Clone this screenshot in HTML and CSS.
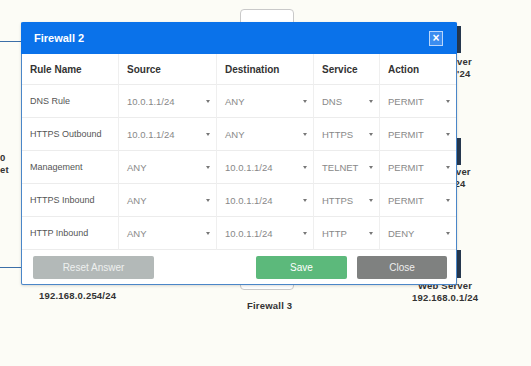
FILE: index.html
```html
<!DOCTYPE html>
<html lang="en">
<head>
    <meta charset="UTF-8">
    <title>Firewall 2</title>
    <link rel="stylesheet" href="styles.css">
</head>
<body>
    <div class="scene">
        <!-- diagram behind the dialog -->
        <div class="link link-top"></div>
        <div class="link link-bottom"></div>
        <div class="device fw3"></div>
        <div class="server server-1"></div>
        <div class="server server-2"></div>
        <div class="server server-3"></div>
        <div class="label host-left">0<br>et</div>
        <div class="label srv1">ver<br>'24</div>
        <div class="label srv2">rver<br>'24</div>
        <div class="label gw">192.168.0.254/24</div>
        <div class="label fw3-name">Firewall 3</div>
        <div class="label web">Web Server<br>192.168.0.1/24</div>

        <div class="modal">
            <div class="modal-header">
                <span class="modal-title">Firewall 2</span>
                <span class="modal-close">&times;</span>
            </div>
            <div class="rules">
                <div class="cell head">Rule Name</div>
                <div class="cell head">Source</div>
                <div class="cell head">Destination</div>
                <div class="cell head">Service</div>
                <div class="cell head">Action</div>

                <div class="cell name">DNS Rule</div>
                <div class="cell pick">10.0.1.1/24<i class="caret"></i></div>
                <div class="cell pick">ANY<i class="caret"></i></div>
                <div class="cell pick">DNS<i class="caret"></i></div>
                <div class="cell pick">PERMIT<i class="caret"></i></div>

                <div class="cell name">HTTPS Outbound</div>
                <div class="cell pick">10.0.1.1/24<i class="caret"></i></div>
                <div class="cell pick">ANY<i class="caret"></i></div>
                <div class="cell pick">HTTPS<i class="caret"></i></div>
                <div class="cell pick">PERMIT<i class="caret"></i></div>

                <div class="cell name">Management</div>
                <div class="cell pick">ANY<i class="caret"></i></div>
                <div class="cell pick">10.0.1.1/24<i class="caret"></i></div>
                <div class="cell pick">TELNET<i class="caret"></i></div>
                <div class="cell pick">PERMIT<i class="caret"></i></div>

                <div class="cell name">HTTPS Inbound</div>
                <div class="cell pick">ANY<i class="caret"></i></div>
                <div class="cell pick">10.0.1.1/24<i class="caret"></i></div>
                <div class="cell pick">HTTPS<i class="caret"></i></div>
                <div class="cell pick">PERMIT<i class="caret"></i></div>

                <div class="cell name">HTTP Inbound</div>
                <div class="cell pick">ANY<i class="caret"></i></div>
                <div class="cell pick">10.0.1.1/24<i class="caret"></i></div>
                <div class="cell pick">HTTP<i class="caret"></i></div>
                <div class="cell pick">DENY<i class="caret"></i></div>
            </div>
            <div class="modal-footer">
                <button class="btn btn-reset">Reset Answer</button>
                <span class="spacer"></span>
                <button class="btn btn-save">Save</button>
                <button class="btn btn-close">Close</button>
            </div>
        </div>
    </div>
</body>
</html>
```

FILE: styles.css
```css
body {
    margin: 0;
    background-color: #fcfcf6;
    font-family: 'Liberation Sans', Arial, sans-serif;
    color: #333;
}
.scene {
    position: relative;
    width: 531px;
    height: 366px;
    overflow: hidden;
}
.link {
    position: absolute;
    left: 0;
    width: 24px;
    height: 1px;
    background-color: #3c6fa8;
}
.link-top { top: 41px; }
.link-bottom { top: 267px; }
.device {
    position: absolute;
    border: 1px solid #c9c9c9;
    border-radius: 4px;
    background-color: #fff;
}
.fw3 {
    left: 240px;
    top: 9px;
    width: 52px;
    height: 279px;
}
.server {
    position: absolute;
    left: 452px;
    width: 9px;
    background-color: #26384f;
}
.server-1 { top: 26px; height: 27px; }
.server-2 { top: 138px; height: 27px; }
.server-3 { top: 250px; height: 28px; }
.label {
    position: absolute;
    font-family: 'Liberation Sans', Arial, sans-serif;
    font-size: 9.5px;
    font-weight: bold;
    line-height: 12px;
    letter-spacing: 0.2px;
    color: #333;
}
.host-left { left: 0; top: 152px; }
.srv1 { left: 457px; top: 56px; }
.srv2 { left: 452px; top: 166px; }
.gw { left: 39px; top: 290px; }
.fw3-name { left: 247px; top: 300px; }
.web { left: 412px; top: 280px; text-align: center; }

.modal {
    position: absolute;
    left: 21px;
    top: 22px;
    width: 434px;
    background-color: #fff;
    border: 1px solid #4a86c8;
    border-top: none;
    border-radius: 2px;
    box-shadow: 0 1px 3px rgba(0, 0, 0, 0.15);
}
.modal-header {
    display: flex;
    align-items: center;
    justify-content: space-between;
    height: 32px;
    margin: 0 -1px;
    padding: 0 14px 0 13px;
    background-color: #0a72ea;
    border-radius: 2px 2px 0 0;
}
.modal-title {
    color: #fff;
    font-size: 11px;
    font-weight: bold;
}
.modal-close {
    display: flex;
    align-items: center;
    justify-content: center;
    width: 12px;
    height: 13px;
    border: 1px solid #b9d6fb;
    background-color: #3b8df0;
    color: #fff;
    font-size: 12px;
    font-weight: bold;
    line-height: 1;
}
.rules {
    display: grid;
    grid-template-columns: 97px 98px 97px 66px 76px;
    grid-template-rows: 31px repeat(5, 33px);
}
.cell {
    display: flex;
    align-items: center;
    justify-content: space-between;
    padding: 0 6px 0 8px;
    border-right: 1px solid #efefef;
    border-bottom: 1px solid #ececec;
    font-size: 9px;
    color: #555;
}
.cell:nth-child(5n) {
    border-right: none;
}
.head {
    font-size: 10px;
    font-weight: bold;
    color: #333;
}
.name {
    color: #555;
}
.pick {
    font-size: 9.5px;
    color: #888;
}
.caret {
    width: 0;
    height: 0;
    border-left: 2px solid transparent;
    border-right: 2px solid transparent;
    border-top: 3px solid #777;
}
.modal-footer {
    display: flex;
    align-items: center;
    gap: 10px;
    padding: 6px 9px 5px 11px;
}
.spacer {
    flex: 1;
}
.btn {
    height: 23px;
    border: none;
    border-radius: 2px;
    color: #fff;
    font-family: 'Liberation Sans', Arial, sans-serif;
    font-size: 10px;
}
.btn-reset {
    width: 121px;
    background-color: #b3b9b8;
    color: #eef0ef;
}
.btn-save {
    width: 91px;
    background-color: #5cb97b;
}
.btn-close {
    width: 90px;
    background-color: #7f8180;
    color: #eeeeee;
}
```
